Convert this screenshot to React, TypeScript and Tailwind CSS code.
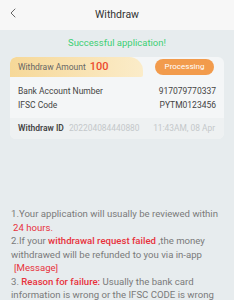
import { ChevronLeft } from "lucide-react";

export default function App() {
  return (
    <div className="w-[234px] h-[300px] overflow-hidden bg-[#e7ecee] font-['Roboto',sans-serif]">
      <div className="relative h-[30px] bg-[#f7f7f7] flex items-center justify-center">
        <ChevronLeft className="absolute left-[5px] top-[5px] w-[16px] h-[16px] text-[#666]" strokeWidth={1.5} />
        <span className="text-[10.5px] text-[#333]">Withdraw</span>
      </div>

      <div className="h-[27px] flex items-center justify-center text-[9.5px] text-[#3ccf73]">
        Successful application!
      </div>

      <div className="mx-[10px] rounded-[6px] bg-[#f4f6f7] overflow-hidden">
        <div className="flex items-center h-[20px]">
          <div className="h-full w-[133px] rounded-tl-[6px] rounded-tr-[14px] rounded-br-[2px] bg-gradient-to-r from-[#f6d898] to-[#fbecc9] flex items-center pl-[8px] gap-[4px]">
            <span className="text-[8.5px] text-[#666]">Withdraw Amount</span>
            <span className="text-[11px] font-medium text-[#ec4a2c]">100</span>
          </div>
          <div className="ml-auto mr-[10px] h-[16px] w-[59px] rounded-full bg-[#f29b4c] flex items-center justify-center text-[8px] text-white">
            Processing
          </div>
        </div>
        <div className="px-[8px] pt-[9px] pb-[7px] flex flex-col gap-[3px] text-[8.5px] text-[#444]">
          <div className="flex justify-between h-[11px] items-center">
            <span>Bank Account Number</span>
            <span>917079770337</span>
          </div>
          <div className="flex justify-between h-[11px] items-center">
            <span>IFSC Code</span>
            <span>PYTM0123456</span>
          </div>
        </div>
        <div className="h-[21px] bg-[#eef1f2] pl-[8px] pr-[9px] flex items-center text-[8.4px]">
          <span className="font-semibold text-[8.5px] text-[#444]">Withdraw ID</span>
          <span className="ml-[5px] text-[#c4c8ca]">202204084440880</span>
          <span className="ml-auto text-[#c4c8ca]">11:43AM, 08 Apr</span>
        </div>
      </div>

      <div className="mt-[68px] px-[11px] text-[9.6px] leading-[13.5px] text-[#7a7a7a]">
        <p>
          1.Your application will usually be reviewed within
          <br />
          <span className="ml-[2px] text-[#e8323c]">24 hours.</span>
        </p>
        <p>
          2.If your <span className="font-medium text-[#e8323c]">withdrawal request failed</span> ,the money withdrawed will be refunded to you via in-app
          <br />
          <span className="ml-[3px] text-[#e8323c]">[Message]</span>
        </p>
        <p>
          3. <span className="font-medium text-[#e8323c]">Reason for failure:</span> Usually the bank card information is wrong or the IFSC CODE is wrong
        </p>
      </div>
    </div>
  );
}
